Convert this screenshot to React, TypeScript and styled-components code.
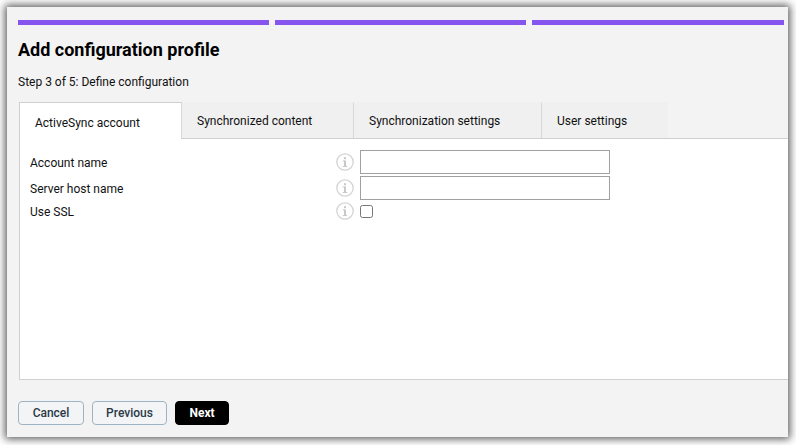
import React from 'react';
import styled, { createGlobalStyle } from 'styled-components';

const GlobalStyle = createGlobalStyle`
  html, body {
    margin: 0;
    height: 100%;
    background: #fff;
    overflow: hidden;
  }
  body {
    font-family: Roboto, "Liberation Sans", sans-serif;
    color: #111;
  }
`;

const Dialog = styled.div`
  box-sizing: border-box;
  width: 781px;
  height: 430px;
  margin: 7px 0 0 7px;
  background: #f3f3f3;
  box-shadow: 0 0 8px 2px rgba(0, 0, 0, 0.65);
  display: flex;
  flex-direction: column;
  padding-top: 13px;
`;

const Progress = styled.div`
  display: grid;
  grid-template-columns: 251px 251px 252px;
  gap: 6px;
  padding-left: 11px;
`;

const ProgressStep = styled.div`
  height: 5px;
  background: #8655f0;
`;

const Title = styled.h1`
  margin: 13px 0 0 11px;
  font-size: 18px;
  line-height: 24px;
  font-weight: 700;
  color: #000;
`;

const StepText = styled.div`
  margin: 12px 0 0 11px;
  font-size: 12px;
  line-height: 16px;
`;

const TabBar = styled.div`
  display: flex;
  margin: 12px 0 0 12px;
  position: relative;
  z-index: 1;
`;

const Tab = styled.div<{ $active?: boolean; $width: number }>`
  box-sizing: border-box;
  width: ${p => p.$width}px;
  height: ${p => (p.$active ? 37 : 36)}px;
  font-size: 12px;
  display: flex;
  align-items: center;
  padding-left: ${p => (p.$active ? 15 : 14)}px;
  background: ${p => (p.$active ? '#fff' : '#f0f0f0')};
  border: 1px solid ${p => (p.$active ? '#d0d0d0' : 'transparent')};
  border-bottom: none;
  border-right: 1px solid #d8d8d8;
  padding-top: ${p => (p.$active ? 3 : 0)}px;
  margin-bottom: ${p => (p.$active ? -1 : 0)}px;

  &:last-child {
    border-right-color: transparent;
  }
`;

const Pane = styled.div`
  box-sizing: border-box;
  margin-left: 12px;
  height: 242px;
  background: #fff;
  border: 1px solid #d0d0d0;
  border-right: none;
  padding: 11px 0 0 10px;
  display: flex;
  flex-direction: column;
`;

const Row = styled.div<{ $height: number }>`
  display: flex;
  align-items: center;
  height: ${p => p.$height}px;
  margin-bottom: 2px;
`;

const Label = styled.label`
  width: 306px;
  font-size: 12px;
  padding-top: 2px;
`;

const InfoIcon = styled.svg`
  width: 18px;
  height: 18px;
  margin-right: 6px;
  flex: none;
`;

const TextInput = styled.input`
  box-sizing: border-box;
  width: 250px;
  height: 24px;
  border: 1px solid #a0a0a0;
  background: #fff;
  margin: 0;
  padding: 0 4px;
`;

const CheckBox = styled.span`
  box-sizing: border-box;
  display: block;
  width: 13px;
  height: 13px;
  border: 1px solid #767676;
  border-radius: 2.5px;
  background: #fff;
`;

const Footer = styled.div`
  display: flex;
  gap: 8px;
  margin: 21px 0 0 11px;
`;

const Button = styled.button<{ $primary?: boolean; $width: number }>`
  box-sizing: border-box;
  width: ${p => p.$width}px;
  height: 24px;
  border-radius: 4px;
  padding: 0;
  font-family: inherit;
  font-size: 12px;
  font-weight: ${p => (p.$primary ? 700 : 500)};
  color: ${p => (p.$primary ? '#fff' : '#2b3a47')};
  background: ${p => (p.$primary ? '#000' : '#f2f4f6')};
  border: 1px solid ${p => (p.$primary ? '#000' : '#9fb3c2')};
`;

const Info = () => (
  <InfoIcon viewBox="0 0 18 18" aria-hidden="true">
    <circle cx="9" cy="9" r="8.2" fill="#fff" stroke="#d4d4d4" strokeWidth="1.3" />
    <rect x="8" y="7.6" width="2" height="6" fill="#c8c8c8" />
    <rect x="8" y="4.2" width="2" height="2" fill="#c8c8c8" />
    <rect x="6.8" y="13" width="4.4" height="1" fill="#c8c8c8" />
    <rect x="6.8" y="7.4" width="2" height="1" fill="#c8c8c8" />
  </InfoIcon>
);

const tabs = [
  { label: 'ActiveSync account', width: 163, active: true },
  { label: 'Synchronized content', width: 172 },
  { label: 'Synchronization settings', width: 188 },
  { label: 'User settings', width: 126 },
];

export default function App() {
  return (
    <>
      <GlobalStyle />
      <Dialog>
        <Progress>
          <ProgressStep />
          <ProgressStep />
          <ProgressStep />
        </Progress>
        <Title>Add configuration profile</Title>
        <StepText>Step 3 of 5: Define configuration</StepText>
        <TabBar>
          {tabs.map(t => (
            <Tab key={t.label} $active={t.active} $width={t.width}>
              {t.label}
            </Tab>
          ))}
        </TabBar>
        <Pane>
          <Row $height={24}>
            <Label>Account name</Label>
            <Info />
            <TextInput />
          </Row>
          <Row $height={24}>
            <Label>Server host name</Label>
            <Info />
            <TextInput />
          </Row>
          <Row $height={18}>
            <Label>Use SSL</Label>
            <Info />
            <CheckBox />
          </Row>
        </Pane>
        <Footer>
          <Button $width={66}>Cancel</Button>
          <Button $width={75}>Previous</Button>
          <Button $primary $width={54}>Next</Button>
        </Footer>
      </Dialog>
    </>
  );
}
